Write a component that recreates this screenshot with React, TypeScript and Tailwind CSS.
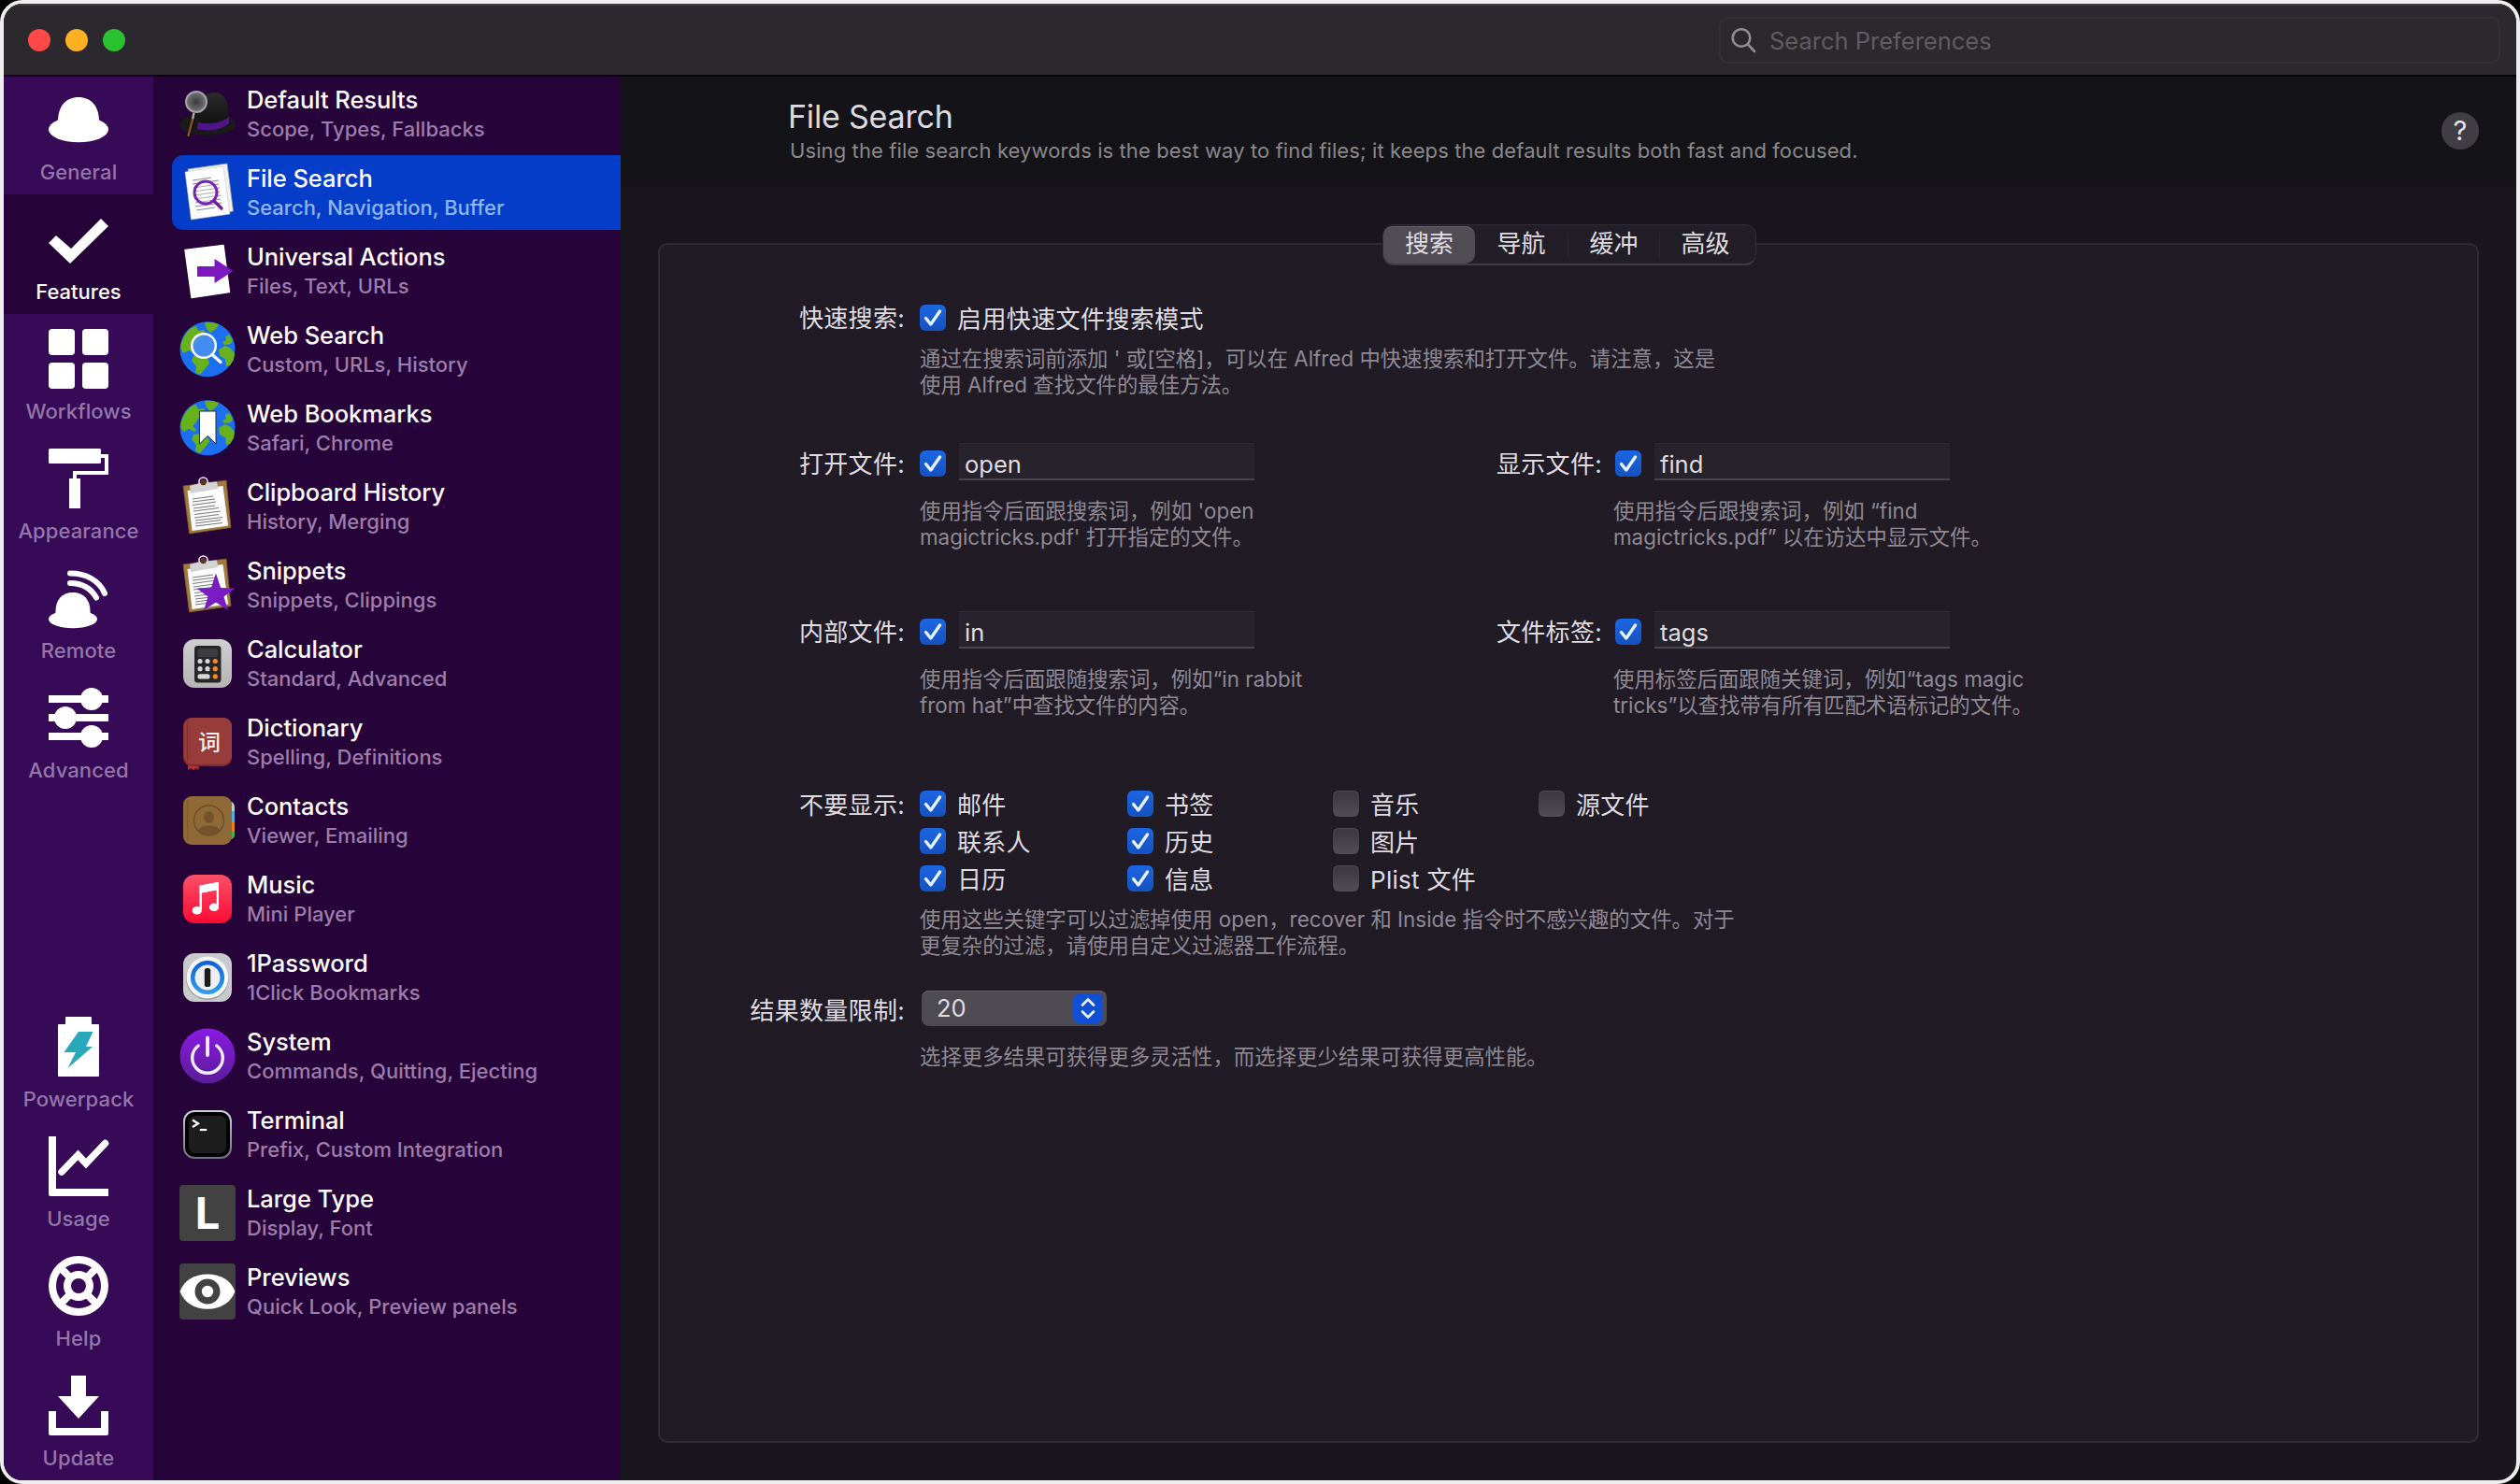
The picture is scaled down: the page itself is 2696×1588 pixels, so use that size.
import React from "react";

const White = ({ children }: { children: React.ReactNode }) => (
  <svg width="64" height="64" viewBox="0 0 64 64" fill="#fff" className="block shrink-0 overflow-visible">
    {children}
  </svg>
);

const Art = ({ children }: { children: React.ReactNode }) => (
  <svg width="60" height="60" viewBox="0 0 60 60" className="block shrink-0 overflow-visible">
    {children}
  </svg>
);

/* ---------- navigation rail icons ---------- */

const BowlerIcon = () => (
  <White>
    <path d="M10 34C10 17 19 8 32 8S54 17 54 34V42H10Z" />
    <ellipse cx="32" cy="42.5" rx="32" ry="13.7" />
  </White>
);
const CheckIcon = () => (
  <White>
    <path d="M0 36L8 28L24 42L56 10L64 18L23 58Z" />
  </White>
);
const GridIcon = () => (
  <White>
    <rect width="28" height="28" rx="4" />
    <rect x="36" width="28" height="28" rx="4" />
    <rect y="36" width="28" height="28" rx="4" />
    <rect x="36" y="36" width="28" height="28" rx="4" />
  </White>
);
const RollerIcon = () => (
  <White>
    <rect width="56" height="16" rx="1.5" />
    <path d="M55 8H62V26H28V34" fill="none" stroke="#fff" strokeWidth="4" />
    <rect x="22" y="32" width="12" height="32" />
  </White>
);
const RemoteIcon = () => (
  <White>
    <path d="M7.5 46C7.5 34 14 26 26 26S44.500 34 44.500 46V56H7.500Z" />
    <ellipse cx="26" cy="54.500" rx="26" ry="9.700" />
    <path d="M23 16C36 16 45.500 22 51 31.500M23 5.500C40 5.500 54 13 60 27" fill="none" stroke="#fff" strokeWidth="6" strokeLinecap="round" />
  </White>
);
const SlidersIcon = () => (
  <White>
    <path d="M0 8H64V16H0ZM0 28H64V36H0ZM0 48H64V56H0Z" />
    <circle cx="46" cy="12" r="12" />
    <circle cx="18" cy="32" r="12" />
    <circle cx="46" cy="52" r="12" />
  </White>
);
const BatteryIcon = () => (
  <White>
    <path d="M18 1Q18 0 19 0H45Q46 0 46 1V8H53Q54 8 54 9V63Q54 64 53 64H11Q10 64 10 63V9Q10 8 11 8H18Z" />
    <path d="M32 16H47.500L40 32H47L20.500 55L29 38H16.500Z" fill="#28a8b8" />
  </White>
);
const UsageIcon = () => (
  <White>
    <path d="M0 0H8V56H64V64H2Q0 64 0 62Z" />
    <path d="M14 38L31.500 20L40 29L60.500 7.500" fill="none" stroke="#fff" strokeWidth="7.500" strokeLinecap="round" />
  </White>
);
const BuoyIcon = () => (
  <White>
    <g fill="none" stroke="#fff" strokeWidth="8">
      <circle cx="32" cy="32" r="28" />
      <circle cx="32" cy="32" r="12" />
      <path d="M11 11L23 23M53 11L41 23M11 53L23 41M53 53L41 41" />
    </g>
  </White>
);
const DownloadIcon = () => (
  <White>
    <path d="M24 0H40V22H54L32 46L10 22H24Z" />
    <path d="M0 38H8V56H56V38H64V62Q64 64 62 64H2Q0 64 0 62Z" />
  </White>
);

/* ---------- feature list icons ---------- */

const HatArt = () => (
  <Art>
    <defs>
      <linearGradient id="hat" x1="0" y1="0" x2="0" y2="1">
        <stop offset="0" stopColor="#2b2b2c" />
        <stop offset="1" stopColor="#121212" />
      </linearGradient>
      <radialGradient id="lens">
        <stop offset="0" stopColor="#3a3a3c" />
        <stop offset="1" stopColor="#77777b" />
      </radialGradient>
    </defs>
    <ellipse cx="30" cy="41" rx="30.500" ry="12" fill="#1b1a1b" />
    <path d="M20 40C18 20 24 7 37 7S52 18 53 38Z" fill="url(#hat)" />
    <path d="M20 39C31 42 44 40 53 33V40C45 47 32 49 19 46Z" fill="#4f1487" />
    <path d="M17 28L10 53" stroke="#0d0d0d" strokeWidth="4" strokeLinecap="round" />
    <path d="M15.500 29L14 36" stroke="#aaa" strokeWidth="2.500" />
    <path d="M14 36L9.500 53" stroke="#8a5423" strokeWidth="2.500" strokeLinecap="round" />
    <circle cx="18" cy="17" r="11" fill="url(#lens)" stroke="#a3a3a8" strokeWidth="2" />
  </Art>
);

const textLines = (
  <g stroke="#8b8b90" strokeWidth="1">
    <path d="M14 17L34 14M14 21L42 17M15 25L42 21M15 29L43 25M16 33L43 29M16 37L44 33M17 41L44 37M17 45L45 41M18 49L38 46" />
  </g>
);

const FileSearchArt = () => (
  <Art>
    <path d="M9 5L51 -1L57.500 50L15 57Z" fill="#f2f2f2" stroke="#9a9aa0" strokeWidth=".8" />
    <path d="M6 8L47 2L54 53L12.500 59Z" fill="#fff" stroke="#c4c4c8" strokeWidth=".6" strokeLinejoin="round" />
    {textLines}
    <circle cx="28" cy="30" r="12" fill="#fff" fillOpacity=".3" stroke="#7a22b4" strokeWidth="3" />
    <path d="M37 39L45 47" stroke="#6a1f96" strokeWidth="3.200" strokeLinecap="round" />
  </Art>
);

const ActionArt = () => (
  <Art>
    <path d="M6 7.500L47 2.500L53.500 52.500L13 58.500Z" fill="#fff" stroke="#fff" strokeWidth="1.500" strokeLinejoin="round" />
    <path d="M19 25H37.500V17L57.500 30L37.500 43V36H19Z" fill="#7c18bd" />
  </Art>
);

const Globe = () => (
  <>
    <circle cx="30" cy="29.700" r="29.500" fill="#1d6ff2" />
    <g fill="#67b21c">
      <path d="M12 7L18 5L20 10L26 9L28 14L24 18L20 20L17 25L14 28L18 32L16 34L10 31L4 34L1 28Q3 15 12 7Z" />
      <path d="M27 1Q34 0 42 3L39 8L33 12L29 8Z" />
      <path d="M15 37L23 36L31 41L32 45L27 51L22 57L17 55L18 48L13 42Z" />
      <path d="M42 30L49 26L55 29L59 34L58 41L54 47L50 48L49 40L43 37Z" />
      <path d="M46 22L50 20L49 16L53 14L57 20L55 24L48 25Z" />
    </g>
  </>
);
const WebSearchArt = () => (
  <Art>
    <Globe />
    <circle cx="26" cy="26" r="12.800" fill="#4a90f0" fillOpacity=".85" stroke="#fff" strokeWidth="2.400" />
    <path d="M35 35.500L44 43.500" stroke="#fff" strokeWidth="3.200" strokeLinecap="round" />
  </Art>
);
const WebBookmarkArt = () => (
  <Art>
    <Globe />
    <path d="M21.500 12H39V47L30.200 38.500L21.500 47Z" fill="#fff" stroke="#1b2b3a" strokeWidth="1" />
  </Art>
);

const Board = () => (
  <>
    <path d="M4 8L50 2L55 52.500L10.500 59Z" fill="#a07a41" stroke="#7b5a2c" strokeWidth=".8" />
    <path d="M8.500 13L46.500 8L52 50.500L13.500 56Z" fill="#fcfcfc" />
    <path d="M14 22L36 19M14 25L38 22M14 28.500L39 25M15 32L38 29M15 35L42 31.500M16 38.500L44 35M16 42L42 38.500M17 45L46 41.500M17 48L44 44.500M17 51L46 47.500" stroke="#77777c" strokeWidth="1" />
    <circle cx="25.500" cy="3.500" r="4.600" fill="none" stroke="#f2f2f2" strokeWidth="1.500" />
    <path d="M11 8L20 5.500L31 4.200L40 3.500L41.500 11L12 16Z" fill="#d3d3d5" />
    <circle cx="25.500" cy="4" r="3.200" fill="#5e3524" />
  </>
);
const ClipboardArt = () => (
  <Art>
    <Board />
  </Art>
);
const SnippetArt = () => (
  <Art>
    <Board />
    <path d="M39 17.500L44.100 33L59.500 33.500L47.500 42.500L52 57L39 48.500L26 57L30.500 42.500L18.500 33.500L33.900 33Z" fill="#7a1cc4" />
  </Art>
);

const CalculatorArt = () => (
  <Art>
    <defs>
      <linearGradient id="calc" x1="0" y1="0" x2="0" y2="1">
        <stop offset="0" stopColor="#cfcfcf" />
        <stop offset="1" stopColor="#b4b4b4" />
      </linearGradient>
    </defs>
    <rect x="4" y="4" width="52" height="52" rx="12" fill="url(#calc)" />
    <rect x="16" y="11" width="28.500" height="39.500" rx="3.500" fill="#262628" />
    <rect x="19.500" y="14" width="21.500" height="9" rx="1.500" fill="#3c3e42" />
    <g fill="#d6d6d6">
      <circle cx="22" cy="27.500" r="2.600" />
      <circle cx="30" cy="27.500" r="2.600" />
      <circle cx="22" cy="35.700" r="2.600" />
      <circle cx="30" cy="35.700" r="2.600" />
      <rect x="19.400" y="41.300" width="13.200" height="5.200" rx="2.600" />
    </g>
    <g fill="#f78a1c">
      <circle cx="38.300" cy="27.500" r="2.600" />
      <circle cx="38.300" cy="35.700" r="2.600" />
      <circle cx="38.300" cy="43.900" r="2.600" />
    </g>
  </Art>
);

const DictionaryArt = () => (
  <Art>
    <path d="M9 52H20.500V60L17.500 58L15 60L12 58L9 60Z" fill="#c12f36" />
    <rect x="4" y="4" width="52" height="52" rx="9" fill="#7c2a2d" />
    <rect x="4.500" y="4" width="51.500" height="50" rx="9" fill="#983c3b" />
    <path d="M8.500 7V51" stroke="#7f3031" strokeWidth="1.200" />
    <text x="32" y="38.500" textAnchor="middle" fontSize="24" fontWeight="500" fill="#f4ecec" fontFamily='"Noto Sans CJK SC", sans-serif'>
      词
    </text>
  </Art>
);

const ContactsArt = () => (
  <Art>
    <path d="M50 10H56Q59 12 59 16V20H50Z" fill="#c9c9c9" />
    <rect x="50" y="20" width="9" height="11" fill="#5aa7e6" />
    <rect x="50" y="31" width="9" height="10" fill="#ee7d1a" />
    <path d="M50 41H59V46Q59 49 55 50H50Z" fill="#3fb34f" />
    <rect x="4" y="4" width="52" height="52" rx="9" fill="#8f6a37" />
    <path d="M8.500 8V52" stroke="#7f5c2c" strokeWidth="1.200" />
    <circle cx="31.500" cy="30" r="16" fill="none" stroke="#6a4c22" strokeWidth="1.300" />
    <ellipse cx="31.500" cy="26.500" rx="5.500" ry="6.500" fill="#73542a" />
    <path d="M20 41Q22 35.500 31.500 35.500T43 41Q38 46 31.500 46T20 41Z" fill="#73542a" />
  </Art>
);

const MusicArt = () => (
  <Art>
    <defs>
      <linearGradient id="music" x1="0" y1="0" x2="0" y2="1">
        <stop offset="0" stopColor="#fa5068" />
        <stop offset="1" stopColor="#fb0a33" />
      </linearGradient>
    </defs>
    <rect x="4" y="4" width="52" height="52" rx="12" fill="url(#music)" />
    <path d="M21.500 17Q21.500 15.500 23 15.200L40.500 12Q42 11.700 42 13.200V38H39.700V20.500L24 23.500V41H21.500Z" fill="#fff" />
    <path d="M21.500 15.800L42 12V19.800L21.500 23.800Z" fill="#fff" />
    <ellipse cx="18.700" cy="42.300" rx="5.100" ry="4.300" fill="#fff" />
    <ellipse cx="37" cy="38.700" rx="5.100" ry="4.300" fill="#fff" />
  </Art>
);

const OnePasswordArt = () => (
  <Art>
    <defs>
      <linearGradient id="onep" x1="0" y1="0" x2="0" y2="1">
        <stop offset="0" stopColor="#1560d8" />
        <stop offset="1" stopColor="#2c9cf2" />
      </linearGradient>
    </defs>
    <rect x="4" y="4" width="52" height="52" rx="12" fill="#c9cacc" />
    <circle cx="30" cy="31" r="23" fill="#9b9ca0" />
    <circle cx="30" cy="30" r="22.500" fill="#f6f6f7" />
    <circle cx="30" cy="30" r="15.800" fill="#eeeff0" stroke="url(#onep)" strokeWidth="4.600" />
    <rect x="26.800" y="20" width="6.400" height="20" rx="2.600" fill="#1d1d1f" />
  </Art>
);

const PowerArt = () => (
  <Art>
    <defs>
      <linearGradient id="power" x1="0" y1="0" x2="0" y2="1">
        <stop offset="0" stopColor="#8a1ae4" />
        <stop offset="1" stopColor="#5a1c96" />
      </linearGradient>
    </defs>
    <circle cx="30" cy="30" r="29.500" fill="url(#power)" />
    <path d="M20.200 19A16.300 16.300 0 1 0 39.800 19" fill="none" stroke="#f4ecfb" strokeWidth="3.400" strokeLinecap="round" />
    <path d="M30 10.500V29" stroke="#f4ecfb" strokeWidth="3.800" strokeLinecap="round" />
  </Art>
);

const TerminalArt = () => (
  <Art>
    <defs>
      <linearGradient id="term" x1="0" y1="0" x2="0" y2="1">
        <stop offset="0" stopColor="#cfd3dc" />
        <stop offset="1" stopColor="#6f7074" />
      </linearGradient>
    </defs>
    <rect x="4" y="4" width="52" height="52" rx="12" fill="url(#term)" />
    <rect x="6" y="6" width="48" height="48" rx="10" fill="#000" />
    <rect x="10" y="10" width="40" height="40" rx="6.500" fill="#1d1d1e" />
    <path d="M14 14.500L20 18.200L14 22" fill="none" stroke="#fff" strokeWidth="2.200" />
    <path d="M21.800 25H29.200" stroke="#fff" strokeWidth="2.200" />
  </Art>
);

const LargeTypeArt = () => (
  <div className="flex h-[60px] w-[60px] shrink-0 items-center justify-center rounded-[4px] bg-[#424242] text-[47px] leading-[60px] font-bold text-white">
    L
  </div>
);

const PreviewArt = () => (
  <Art>
    <rect width="60" height="60" rx="4" fill="#424242" />
    <path d="M0.500 30C5 18 16 11.500 30 11.500S55 18 59.500 30C55 42 44 48.700 30 48.700S5 42 0.500 30Z" fill="#fff" />
    <circle cx="30" cy="30" r="13.500" fill="#424242" />
    <circle cx="30" cy="30" r="6.200" fill="#fff" />
  </Art>
);

/* ---------- data ---------- */

const navTop = [
  { label: "General", Icon: BowlerIcon },
  { label: "Features", Icon: CheckIcon, active: true },
  { label: "Workflows", Icon: GridIcon },
  { label: "Appearance", Icon: RollerIcon },
  { label: "Remote", Icon: RemoteIcon },
  { label: "Advanced", Icon: SlidersIcon },
];
const navBottom = [
  { label: "Powerpack", Icon: BatteryIcon },
  { label: "Usage", Icon: UsageIcon },
  { label: "Help", Icon: BuoyIcon },
  { label: "Update", Icon: DownloadIcon },
];

const features = [
  { title: "Default Results", sub: "Scope, Types, Fallbacks", Icon: HatArt },
  { title: "File Search", sub: "Search, Navigation, Buffer", Icon: FileSearchArt, active: true },
  { title: "Universal Actions", sub: "Files, Text, URLs", Icon: ActionArt },
  { title: "Web Search", sub: "Custom, URLs, History", Icon: WebSearchArt },
  { title: "Web Bookmarks", sub: "Safari, Chrome", Icon: WebBookmarkArt },
  { title: "Clipboard History", sub: "History, Merging", Icon: ClipboardArt },
  { title: "Snippets", sub: "Snippets, Clippings", Icon: SnippetArt },
  { title: "Calculator", sub: "Standard, Advanced", Icon: CalculatorArt },
  { title: "Dictionary", sub: "Spelling, Definitions", Icon: DictionaryArt },
  { title: "Contacts", sub: "Viewer, Emailing", Icon: ContactsArt },
  { title: "Music", sub: "Mini Player", Icon: MusicArt },
  { title: "1Password", sub: "1Click Bookmarks", Icon: OnePasswordArt },
  { title: "System", sub: "Commands, Quitting, Ejecting", Icon: PowerArt },
  { title: "Terminal", sub: "Prefix, Custom Integration", Icon: TerminalArt },
  { title: "Large Type", sub: "Display, Font", Icon: LargeTypeArt },
  { title: "Previews", sub: "Quick Look, Preview panels", Icon: PreviewArt },
];

const filters = [
  [["邮件", true], ["书签", true], ["音乐", false], ["源文件", false]],
  [["联系人", true], ["历史", true], ["图片", false]],
  [["日历", true], ["信息", true], ["Plist 文件", false]],
] as [string, boolean][][];

/* ---------- controls ---------- */

const Check = ({ on = true }: { on?: boolean }) =>
  on ? (
    <div className="flex h-7 w-7 shrink-0 items-center justify-center rounded-[6px] bg-linear-to-b from-[#1c66e4] to-[#1552c0]">
      <svg width="28" height="28" viewBox="0 0 28 28" fill="none">
        <path d="M6.500 14.500L11.800 21L21.500 7" stroke="#e8f1ff" strokeWidth="3.400" strokeLinecap="round" strokeLinejoin="round" />
      </svg>
    </div>
  ) : (
    <div className="h-7 w-7 shrink-0 rounded-[6px] bg-linear-to-b from-[#3b3840] to-[#504d56] shadow-[inset_0_1px_0_#4d4a52]" />
  );

const Label = ({ children }: { children: React.ReactNode }) => (
  <div className="w-[262px] shrink-0 pt-[2px] text-right tracking-[0.3px]">{children}</div>
);

const Help = ({ lines }: { lines: string[] }) => (
  <div className="text-[22.4px] leading-7 whitespace-nowrap text-[#8f8a94]">
    {lines.map((l) => (
      <div key={l}>{l}</div>
    ))}
  </div>
);

const Field = ({ value }: { value: string }) => (
  <div className="ml-[14px] h-10 w-[316px] shrink-0 -translate-y-[2px] border-t border-b-2 border-t-[#2e2b34] border-b-[#48454e] bg-[#26232c] pl-[6px] text-[25.5px] leading-[44px]">
    {value}
  </div>
);

const KeywordRow = ({ items }: { items: { label: string; value: string; help: string[] }[] }) => (
  <div className="flex">
    {items.map((it, i) => (
      <div key={it.label} className={i === 0 ? "w-[746px] shrink-0" : "shrink-0"}>
        <div className="flex h-10 items-center">
          <Label>{it.label}</Label>
          <div className={i === 0 ? "w-4 shrink-0" : "w-[14px] shrink-0"} />
          <Check />
          <Field value={it.value} />
        </div>
        <div className={i === 0 ? "mt-[17px] pl-[278px]" : "mt-[17px] pl-[274px]"}>
          <Help lines={it.help} />
        </div>
      </div>
    ))}
  </div>
);

const NavCell = ({ label, Icon, active }: { label: string; Icon: React.FC; active?: boolean }) => (
  <div className={active ? "flex h-32 flex-col items-center bg-[#250339] pt-4 text-white" : "flex h-32 flex-col items-center pt-4 text-[#9576ab]"}>
    <Icon />
    <div className={active ? "mt-2 text-[22px] leading-8 font-medium" : "mt-2 text-[22px] leading-8 font-[450] tracking-[0.1px]"}>{label}</div>
  </div>
);

export default function App() {
  return (
    <div className='h-[1588px] w-[2696px] bg-black font-["Inter","Noto_Sans_CJK_SC",sans-serif]'>
      <div className="flex h-full w-full flex-col overflow-hidden rounded-[24px] border-4 border-[#eeeeee] bg-[#19161e]">
        {/* title bar */}
        <div className="flex h-[76px] shrink-0 items-center border-t-2 border-[#3c3a3f] bg-[#2b292e] pr-[17px] pl-[26px]">
          <div className="flex gap-4">
            <div className="h-6 w-6 rounded-full bg-[#ff4848]" />
            <div className="h-6 w-6 rounded-full bg-[#fdb024]" />
            <div className="h-6 w-6 rounded-full bg-[#2ac131]" />
          </div>
          <div className="ml-auto flex h-[50px] w-[836px] items-center rounded-[10px] border-2 border-[#333136] pl-[11px] text-[25.5px] text-[#5f5d62]">
            <svg width="28" height="28" viewBox="0 0 28 28" fill="none" stroke="#908e93" strokeWidth="2.600" strokeLinecap="round" className="mr-[13px]">
              <circle cx="11" cy="11.500" r="9.300" />
              <path d="M18 18.500L25 26" />
            </svg>
            <span className="pt-[2px]">Search Preferences</span>
          </div>
        </div>

        <div className="flex min-h-0 flex-1">
          {/* navigation rail */}
          <div className="flex w-40 shrink-0 flex-col justify-between bg-[#360a57] shadow-[inset_0_2px_0_#100518]">
            <div>
              {navTop.map((n) => (
                <NavCell key={n.label} {...n} />
              ))}
            </div>
            <div>
              {navBottom.map((n) => (
                <NavCell key={n.label} {...n} />
              ))}
            </div>
          </div>

          {/* feature list */}
          <div className="flex w-[500px] shrink-0 flex-col gap-1 bg-[#260339] pt-[2px] pl-5 shadow-[inset_0_2px_0_#0d0213]">
            {features.map(({ title, sub, Icon, active }) => (
              <div key={title} className={active ? "flex h-20 shrink-0 gap-3 rounded-l-[12px] bg-[#053dc8] pt-[10px] pl-2" : "flex h-20 shrink-0 gap-3 pt-[10px] pl-2"}>
                <Icon />
                <div className="-mt-px whitespace-nowrap">
                  <div className="text-[25.5px] leading-[31px] font-[450] tracking-[-0.05px] text-white">{title}</div>
                  <div className={active ? "text-[22px] leading-8 font-[450] text-[#8fb6f4]" : "text-[22px] leading-8 font-[450] text-[#9d7daa]"}>{sub}</div>
                </div>
              </div>
            ))}
          </div>

          {/* main area */}
          <div className="flex min-w-0 flex-1 flex-col">
            <div className="flex h-[120px] shrink-0 items-center justify-between border-t-2 border-[#050506] bg-[#141317] pr-10 pl-[181px]">
              <div className="pb-[3px]">
                <div className="-ml-[2px] text-[34px] leading-[44px] tracking-[-0.2px] text-[#dddce0]">File Search</div>
                <div className="text-[22px] leading-[29px] tracking-[0.1px] text-[#8a888c]">
                  Using the file search keywords is the best way to find files; it keeps the default results both fast and focused.
                </div>
              </div>
              <div className="mb-[2px] flex h-10 w-10 items-center justify-center rounded-full bg-[#403e44] text-[29px] leading-10 text-[#e6e5e8]">?</div>
            </div>

            <div className="mx-10 mt-[60px] flex h-[1284px] w-[1948px] flex-col rounded-[10px] border-2 border-[#302c36] bg-[#211b26] text-[26px] leading-10 whitespace-nowrap text-[#dfdde2]">
              <div className="-mt-[22px] ml-[773px] flex h-11 w-[400px] items-center rounded-[12px] border border-b-2 border-[#302d36] border-b-[#403c46] bg-[#221e28] text-[26px] leading-[38px]">
                <div className="h-10 w-[98px] rounded-[10px] bg-[#504d55] text-center shadow-[inset_0_1px_0_#65626a]">搜索</div>
                <div className="h-10 w-[99px] text-center">导航</div>
                <div className="h-[26px] w-px bg-[#2b2731]" />
                <div className="h-10 w-[97px] text-center">缓冲</div>
                <div className="h-[26px] w-px bg-[#2b2731]" />
                <div className="h-10 w-[97px] text-center">高级</div>
              </div>

              <div className="mt-9 flex h-10 items-center">
                <Label>快速搜索:</Label>
                <div className="w-4" />
                <Check />
                <div className="ml-3 pt-[4px] tracking-[0.4px]">启用快速文件搜索模式</div>
              </div>
              <div className="mt-[10px] pl-[278px]">
                <Help lines={["通过在搜索词前添加 ' 或[空格]，可以在 Alfred 中快速搜索和打开文件。请注意，这是", "使用 Alfred 查找文件的最佳方法。"]} />
              </div>

              <div className="mt-[50px]">
                <KeywordRow
                  items={[
                    { label: "打开文件:", value: "open", help: ["使用指令后面跟搜索词，例如 'open", "magictricks.pdf' 打开指定的文件。"] },
                    { label: "显示文件:", value: "find", help: ["使用指令后跟搜索词，例如 “find", "magictricks.pdf” 以在访达中显示文件。"] },
                  ]}
                />
              </div>
              <div className="mt-[67px]">
                <KeywordRow
                  items={[
                    { label: "内部文件:", value: "in", help: ["使用指令后面跟随搜索词，例如“in rabbit", "from hat”中查找文件的内容。"] },
                    { label: "文件标签:", value: "tags", help: ["使用标签后面跟随关键词，例如“tags magic", "tricks”以查找带有所有匹配术语标记的文件。"] },
                  ]}
                />
              </div>

              <div className="mt-[71px] flex">
                <Label>不要显示:</Label>
                <div className="ml-4">
                  {filters.map((row) => (
                    <div key={row[0][0]} className="grid grid-cols-[222px_220px_220px_220px]">
                      {row.map(([name, on]) => (
                        <div key={name} className="flex h-10 items-center gap-3">
                          <Check on={on} />
                          <div className="pt-[4px] tracking-[0.3px]">{name}</div>
                        </div>
                      ))}
                    </div>
                  ))}
                </div>
              </div>
              <div className="mt-[10px] pl-[278px]">
                <Help lines={["使用这些关键字可以过滤掉使用 open，recover 和 Inside 指令时不感兴趣的文件。对于", "更复杂的过滤，请使用自定义过滤器工作流程。"]} />
              </div>

              <div className="mt-[34px] flex h-10">
                <Label>结果数量限制:</Label>
                <div className="ml-[18px] flex h-[38px] w-[198px] items-center justify-between rounded-[8px] bg-[#4e4b53] pr-1 pl-4 text-[25.500px] leading-[36px] shadow-[inset_0_1px_0_#66636a]">
                  <span className="pb-px">20</span>
                  <svg width="32" height="32" viewBox="0 0 32 32" fill="none">
                    <rect width="32" height="32" rx="7" fill="#1150d4" />
                    <path d="M10 12.500L16 6.500L22 12.500M10 19.500L16 25.500L22 19.500" stroke="#e8f0ff" strokeWidth="2.800" strokeLinecap="round" strokeLinejoin="round" />
                  </svg>
                </div>
              </div>
              <div className="mt-[17px] pl-[278px]">
                <Help lines={["选择更多结果可获得更多灵活性，而选择更少结果可获得更高性能。"]} />
              </div>
            </div>
          </div>
        </div>
      </div>
    </div>
  );
}
